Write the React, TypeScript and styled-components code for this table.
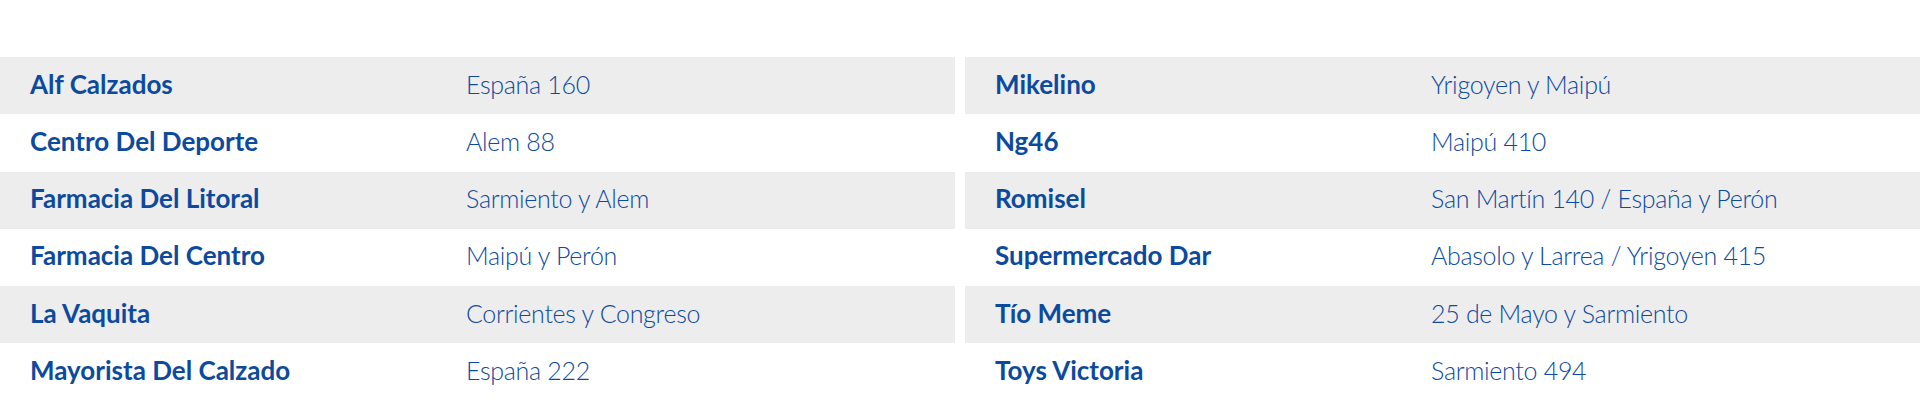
import * as React from 'react';
import styled, { createGlobalStyle } from 'styled-components';

const GlobalStyle = createGlobalStyle`
    html, body {
        margin: 0;
        padding: 0;
        background: #ffffff;
    }
    body {
        font-family: Lato, "Liberation Sans", sans-serif;
    }
`;

const Page = styled.div`
    width: 1920px;
    height: 400px;
    padding-top: 57px;
    box-sizing: border-box;
    overflow: hidden;
    display: grid;
    grid-template-columns: 955px 955px;
    column-gap: 10px;
    align-items: start;
`;

const Table = styled.div`
    display: flex;
    flex-direction: column;
`;

const Row = styled.div<{ $shaded: boolean }>`
    height: 57.25px;
    box-sizing: border-box;
    padding: 0 0 4px 30px;
    display: grid;
    grid-template-columns: 436px 1fr;
    align-items: center;
    background: ${(p) => (p.$shaded ? '#ededed' : '#ffffff')};
    color: #0c4a9e;
    white-space: nowrap;
`;

const Name = styled.div`
    font-size: 26px;
    font-weight: 700;
`;

const Address = styled.div`
    font-size: 25px;
    font-weight: 300;
    letter-spacing: -0.3px;
`;

const left = [
    ['Alf Calzados', 'España 160'],
    ['Centro Del Deporte', 'Alem 88'],
    ['Farmacia Del Litoral', 'Sarmiento y Alem'],
    ['Farmacia Del Centro', 'Maipú y Perón'],
    ['La Vaquita', 'Corrientes y Congreso'],
    ['Mayorista Del Calzado', 'España 222']
];

const right = [
    ['Mikelino', 'Yrigoyen y Maipú'],
    ['Ng46', 'Maipú 410'],
    ['Romisel', 'San Martín 140 / España y Perón'],
    ['Supermercado Dar', 'Abasolo y Larrea / Yrigoyen 415'],
    ['Tío Meme', '25 de Mayo y Sarmiento'],
    ['Toys Victoria', 'Sarmiento 494']
];

const StoreTable = ({ rows }: { rows: string[][] }) => (
    <Table>
        {rows.map(([name, address], i) => (
            <Row key={name} $shaded={i % 2 === 0}>
                <Name>{name}</Name>
                <Address>{address}</Address>
            </Row>
        ))}
    </Table>
);

export default function App() {
    return (
        <>
            <GlobalStyle />
            <Page>
                <StoreTable rows={left} />
                <StoreTable rows={right} />
            </Page>
        </>
    );
}
